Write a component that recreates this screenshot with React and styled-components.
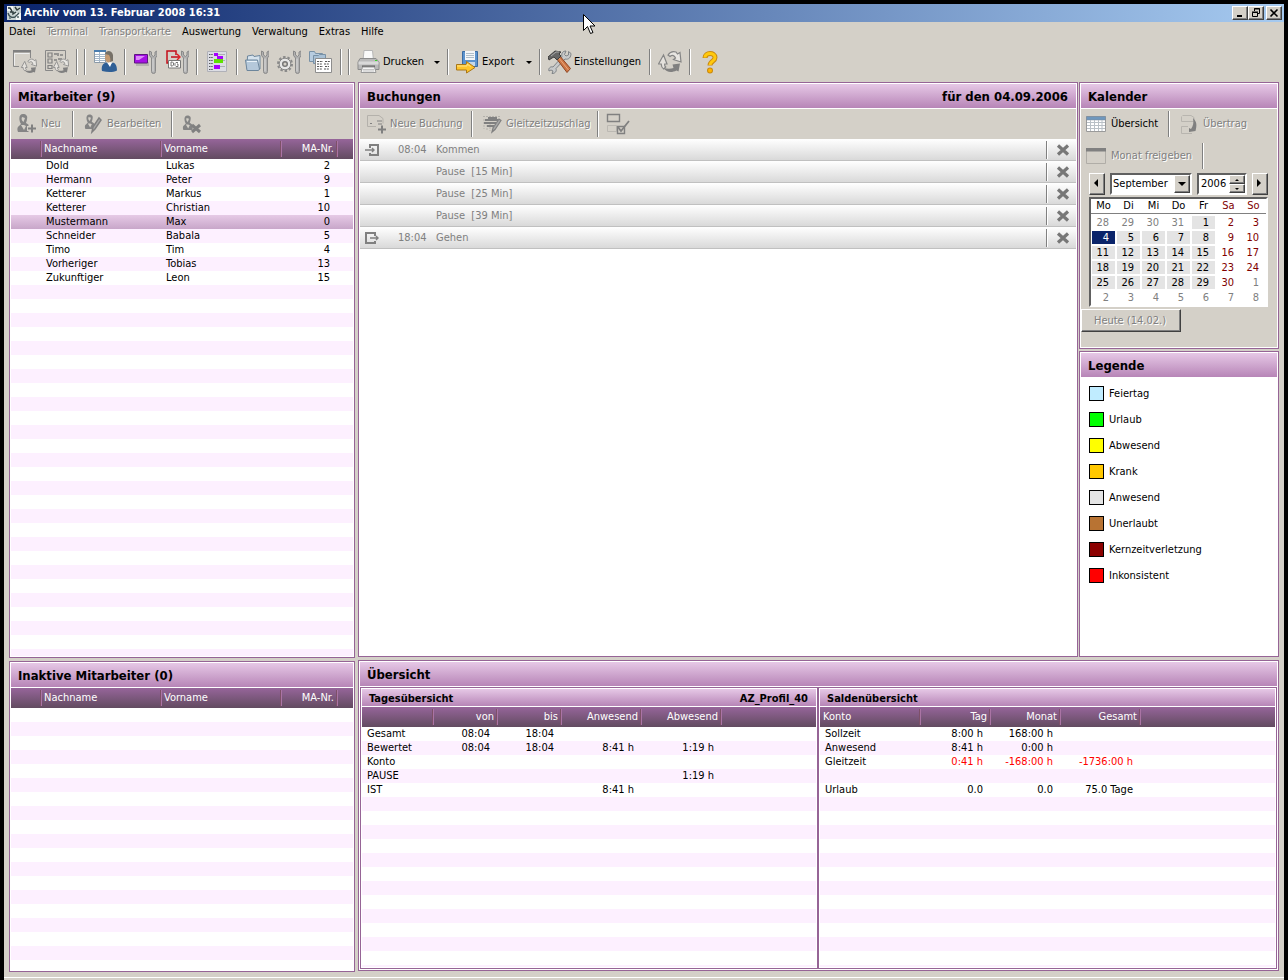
import React, { useState } from 'react';
import styled, { createGlobalStyle, css } from 'styled-components';

const FACE = '#d4d0c8';
const PLUM = '#966496';

const GlobalStyle = createGlobalStyle`
    *, *::before, *::after {
        box-sizing: border-box;
    }

    body {
        margin: 0;
        background: #000;
        color: #000;
    }

    body, button, input, select, table {
        font-family: "DejaVu Sans Condensed", "DejaVu Sans", sans-serif;
        font-stretch: condensed;
        font-size: 11px;
        line-height: 14px;
    }

    h1, h2, h3, ul {
        margin: 0;
        padding: 0;
        list-style: none;
        font-weight: bold;
    }
`

/* window frame */

const Frame = styled.div`
    display: flex;
    flex-direction: column;
    min-height: 100vh;
    padding: 4px 4px 0;
`

const Window = styled.div`
    display: flex;
    flex: 1;
    flex-direction: column;
    background: ${FACE};
`

const TitleBar = styled.header`
    display: flex;
    align-items: center;
    height: 18px;
    padding: 0 2px 0 3px;
    gap: 3px;
    background: linear-gradient(90deg, #0a246a, #a6caf0);
`

const Title = styled.h1`
    flex: 1;
    color: #fff;
    font-size: 11px;
`

const raised = css`
    border: 1px solid;
    border-color: #fff #404040 #404040 #fff;
    box-shadow: inset -1px -1px 0 #808080;
    background: ${FACE};
`

const sunken = css`
    border: 2px solid;
    border-color: #606060 #fff #fff #606060;
    background: #fff;
`

const CaptionButtons = styled.div`
    display: flex;
`

const CaptionButton = styled.button`
    ${raised}
    width: 16px;
    height: 14px;
    margin-left: ${({ $apart }) => ($apart ? '2px' : '0')};
    padding: 0;

    svg {
        display: block;
        margin: auto;
    }
`

const Pointer = styled.svg`
    position: absolute;
    top: 14px;
    left: 583px;
    pointer-events: none;
`

const MenuBar = styled.nav`
    display: flex;
    align-items: center;
    height: 20px;
    padding-left: 5px;
    gap: 11px;
`

const MenuItem = styled.button`
    border: 0;
    padding: 0;
    background: none;
    color: #000;
    white-space: nowrap;

    &:disabled {
        color: #808080;
        text-shadow: 1px 1px 0 #fff;
    }
`

/* toolbars */

const Toolbar = styled.div`
    display: flex;
    align-items: center;
    height: ${({ $main }) => ($main ? '40px' : '30px')};
    padding-left: ${({ $main }) => ($main ? '5px' : '0')};
    background: ${FACE};
`

const ToolButton = styled.button`
    display: flex;
    flex: 0 0 auto;
    align-items: center;
    width: ${({ $width }) => $width || 32}px;
    height: 28px;
    padding: 0 4px;
    gap: 2px;
    border: 0;
    background: none;
    color: #000;
    white-space: nowrap;

    &:disabled {
        color: #808080;
        text-shadow: 1px 1px 0 #fff;
    }

    svg {
        flex: 0 0 auto;
    }
`

const DropMark = styled.span`
    width: 5px;
    margin-left: auto;
    border: 3px solid transparent;
    border-top-color: #000;
    border-bottom: 0;
`

const Divider = styled.span`
    flex: 0 0 2px;
    height: 26px;
    margin: 0 3px;
    border-left: 1px solid #808080;
    border-right: 1px solid #fff;
`

/* panels */

const Workspace = styled.main`
    display: flex;
    flex: 1;
    gap: 3px;
    padding: 0 5px 5px;
`

const SideColumn = styled.div`
    display: flex;
    flex: 0 0 346px;
    flex-direction: column;
    gap: 3px;
`

const CenterColumn = styled.div`
    display: flex;
    flex: 1;
    flex-direction: column;
    gap: 3px;
    padding-bottom: 1px;
`

const UpperRow = styled.div`
    display: grid;
    flex: 1;
    grid-template-columns: 1fr 200px;
    gap: 1px;
`

const CalendarColumn = styled.div`
    display: flex;
    flex-direction: column;
    gap: 2px;
`

const Panel = styled.section`
    display: flex;
    flex: ${({ $height }) => ($height ? `0 0 ${$height}px` : '1')};
    flex-direction: column;
    min-width: 0;
    padding: 1px;
    border: 1px solid ${PLUM};
    background: #fff;
`

const PanelHeader = styled.div`
    display: flex;
    align-items: center;
    justify-content: space-between;
    height: ${({ $small }) => ($small ? '17px' : '24px')};
    margin-bottom: 1px;
    padding: 2px 8px 0 7px;
    background: linear-gradient(#e6c8e6, #b785b7);
`

const PanelTitle = styled.h2`
    font-size: ${({ $small }) => ($small ? '11px' : '13px')};
`

const Overview = styled.div`
    display: grid;
    flex: 1;
    grid-template-columns: 458fr 459fr;
`

/* tables */

const Striped = styled.div`
    flex: 1;
    background: repeating-linear-gradient(#fff 0 14px, #fdf0ff 14px 28px) 0 20px;
`

const Table = styled.table`
    width: 100%;
    table-layout: fixed;
    border-collapse: collapse;
`

const HeadRow = styled.tr`
    height: 20px;
    background: linear-gradient(#96659a, #624b60);
`

const HeadCell = styled.th`
    padding: 0 ${({ $right }) => ($right ? '4px' : '0')} 0 ${({ $inset }) => $inset}px;
    background: ${({ $last }) =>
        $last ? 'none' : 'linear-gradient(90deg, #7d5068 50%, #aa74a4 50%) right center / 2px 16px no-repeat'};
    color: #fff;
    font-weight: normal;
    text-align: ${({ $right }) => ($right ? 'right' : 'left')};
    white-space: nowrap;
`

const Row = styled.tr`
    height: 14px;
    background: ${({ $selected }) => ($selected ? 'linear-gradient(#e6cae6, #c8a6c9)' : 'none')};
    color: ${({ $negative }) => ($negative ? '#f00' : '#000')};
`

const Cell = styled.td`
    padding: 0 ${({ $right }) => ($right ? '8px' : '0')} 0 ${({ $inset }) => $inset}px;
    color: ${({ $plain }) => ($plain ? '#000' : 'inherit')};
    text-align: ${({ $right }) => ($right ? 'right' : 'left')};
    white-space: nowrap;
`

/* bookings */

const Booking = styled.li`
    display: flex;
    align-items: center;
    height: 22px;
    border-bottom: 1px solid #c0c0c0;
    background: linear-gradient(#fff, #d9d9d9);
    color: #808080;
    font-weight: normal;
`

const BookingIcon = styled.span`
    display: flex;
    width: 38px;
    padding-left: 5px;
`

const BookingTime = styled.time`
    width: 38px;
`

const BookingText = styled.span`
    flex: 1;
    white-space: pre;
`

const DeleteButton = styled.button`
    width: 25px;
    height: 20px;
    padding: 0 0 0 5px;
    border: 0;
    background: none;

    svg {
        display: block;
    }
`

const BookingDivider = styled.span`
    width: 2px;
    height: 18px;
    margin-right: 3px;
    border-left: 1px solid #808080;
    border-right: 1px solid #fff;
`

/* calendar */

const CalendarBody = styled.div`
    display: flex;
    flex: 1;
    flex-direction: column;
    align-items: flex-start;
    gap: 2px;
    background: ${FACE};
`

const MonthRow = styled.div`
    display: flex;
    height: 22px;
    margin-left: 8px;
    gap: 5px;
`

const StepButton = styled.button`
    ${raised}
    width: 16px;
    padding: 0 2px 2px 0;

    svg {
        display: block;
        margin: auto;
    }
`

const Field = styled.div`
    ${sunken}
    display: flex;
    width: ${({ $width }) => $width}px;
`

const MonthSelect = styled.select`
    flex: 1;
    min-width: 0;
    padding: 0 0 0 1px;
    border: 0;
    outline: 0;
    appearance: none;
    background: none;
    color: #000;
`

const SelectArrow = styled.span`
    ${raised}
    display: flex;
    align-items: center;
    justify-content: center;
    width: 16px;
    pointer-events: none;
`

const YearInput = styled.input`
    flex: 1;
    min-width: 0;
    padding: 0 0 0 2px;
    border: 0;
    outline: 0;
    background: none;
`

const Spinner = styled.div`
    display: grid;
    width: 16px;
`

const SpinButton = styled.button`
    ${raised}
    padding: 0;

    svg {
        display: block;
        margin: auto;
    }
`

const MonthTable = styled.table`
    ${sunken}
    width: 179px;
    margin-left: 8px;
    table-layout: fixed;
    border-spacing: 0;
`

const WeekdayCell = styled.th`
    height: 16px;
    padding: 0;
    background: linear-gradient(#808080, #808080) 0 14px / 100% 1px no-repeat;
    color: ${({ $weekend }) => ($weekend ? '#800000' : '#000')};
    font-weight: normal;
    line-height: 14px;
    vertical-align: top;
`

const dayColor = { muted: '#808080', weekend: '#800000', today: '#fff', present: '#000' };
const dayFill = { today: '#0a246a', present: '#e4e4e4' };

const DayCell = styled.td`
    height: 15px;
    padding: 0 6px 0 0;
    border: 1px solid #fff;
    background: ${({ $kind }) => dayFill[$kind] || '#fff'};
    color: ${({ $kind }) => dayColor[$kind]};
    line-height: 13px;
    text-align: right;
`

const TodayButton = styled.button`
    ${raised}
    width: 100px;
    height: 23px;
    padding: 0 2px 0 0;
    color: #808080;
    text-shadow: 1px 1px 0 #fff;
`

/* legend */

const LegendList = styled.ul`
    display: flex;
    flex-direction: column;
    padding: 8px;
    gap: 11px;
`

const LegendItem = styled.li`
    display: flex;
    align-items: center;
    gap: 5px;
    font-weight: normal;
`

const Swatch = styled.span`
    width: 15px;
    height: 15px;
    border: 1px solid #000;
    background: ${({ $color }) => $color};
`

const StatusStrip = styled.footer`
    height: 3px;
    border-top: 1px solid #fff;
`

/* icons */

const Icon = ({ children, size = 24, ...rest }) => (
    <svg width={size} height={size} viewBox={`0 0 ${size} ${size}`} fill="none" aria-hidden="true" {...rest}>
        {children}
    </svg>
)

const Wrench = () => (
    <g>
        <path d="M16.500 1v4.500l2 2.500v13.500q0 2 2 2t2-2V8l1.500-2.500V1l-2 1v3l-1.500 1.500L18.500 5V2z" fill="#b0b0b0" stroke="#8a8a8a" />
        <path d="M20 8.500v13" stroke="#dedede" />
    </g>
)

const RecycleArrows = () => (
    <g strokeWidth="1.200">
        <path d="M5.500 5 .5 14h2.700c0 2 1 4 2.500 5l2-2c-1-1-1.200-2-1-3H9z" fill="#e4e1dc" stroke="#858585" />
        <path d="M10 5c2-3 5-4 8-3l1.500 2L22 2.500l1 9.500-7.500-2.500 2-1.500c-1-2.500-3-3.500-5.500-1.500z" fill="#e8e6e2" stroke="#858585" />
        <path d="M5.500 18c4 1 7 1 10 0l-1-3.500 7.500-1-1.500 8-2-1c-5 2.500-10 2-13-2.500z" fill="#808080" />
    </g>
)

const AppIcon = () => (
    <Icon size={14}>
        <path d="M0 0h14v14H0z" fill="#c9d3d2" />
        <path d="M0 0h6v5H0zM9 7h5v7H9z" fill="#f2f5f4" />
        <path d="M1 2h2l2 3M8 1l2 3 3-2M3 6h3v2l3-2" stroke="#2c3a3b" strokeWidth="1.400" />
        <path d="M1 7c1 4 4 5 7 4l4-4" stroke="#3d5054" strokeWidth="1.400" />
        <path d="M2 11h2v2H2zM10 10h2v2h-2z" fill="#78898b" />
    </Icon>
)

const WindowRefreshIcon = () => (
    <Icon>
        <path d="M.5 1v15.500H6M17.500 1v7" stroke="#888" />
        <path d="M0 0h18v2.500H0z" fill="#808080" />
        <path d="M1.500 3.500v12M1.500 3.500h15" stroke="#eee" />
        <g transform="translate(8 8) scale(.68)"><RecycleArrows /></g>
    </Icon>
)

const ListRefreshIcon = () => (
    <Icon>
        <path d="M.5 20.500V.5h20V9M.5 20.500H8" stroke="#888" />
        <path d="M3 3h4v4H3zM3 9h4v4H3zM3 15.500h4v3H3z" stroke="#808080" strokeWidth="1.200" />
        <path d="M9 4h3M13 3v3M15 5h3M9 10h3M13 9h4" stroke="#808080" strokeWidth="1.500" />
        <g transform="translate(8 8) scale(.68)"><RecycleArrows /></g>
    </Icon>
)

const StaffTableIcon = () => (
    <Icon>
        <path d="M1.500.5h11v12h-11z" fill="#fff" stroke="#8b9aa8" />
        <path d="M1 0h12v2H1z" fill="#4a7daf" />
        <path d="M2 4.500h10M2 6.500h10M2 8.500h10M2 10.500h10M6.500 2v10" stroke="#a6b8ca" />
        <path d="M9 21c-1-5 1-8 5-8.500l3 2 3-2c3 1 4 4 4 8-4 2-9 2-15 .5z" fill="#2f5f96" />
        <path d="m14 12.500 3 4.500 2-4.500z" fill="#fff" />
        <ellipse cx="15.500" cy="7.500" rx="3.500" ry="5" fill="#c49a72" />
        <path d="M12 4c1-4 7-4 8 1v6l-3 1c1-3 0-5-1-7z" fill="#777168" />
    </Icon>
)

const TerminalIcon = () => (
    <Icon>
        <path d="M3 12h13v4H3z" fill="#888" opacity=".4" />
        <path d="M1.500 4.500h13V13h-13z" fill="#a510e4" stroke="#5d1780" />
        <path d="M3 6h9l-6 4H3z" fill="#dc8bf9" />
        <Wrench />
    </Icon>
)

const DataGroupIcon = () => (
    <Icon>
        <path d="M11 5V1H2v12h3M6 7h8" stroke="#c40d18" strokeWidth="1.500" />
        <path d="m12 4 3 3-3 3" stroke="#e41b20" strokeWidth="1.400" />
        <path d="M3.500 10.500h12V18h-12z" fill="#fff" stroke="#777" />
        <path d="M6 12v4h1.500l1-1v-2l-1-1zM13 12.500h-2l-1 1v2l1 1h2V14h-1" stroke="#555" strokeWidth=".8" />
        <Wrench />
    </Icon>
)

const ScheduleIcon = () => (
    <Icon>
        <path d="M2.500 1.500h19v20h-19z" fill="#dcdde4" stroke="#b0b1b8" />
        <path d="M4 4.500h4M4 7.500h4M4 10.500h4M4 13.500h4M4 16.500h4M4 19.500h4" stroke="#56595e" strokeDasharray="1.500 .7" />
        <path d="M10 4.500h10M10 10.500h10M10 16.500h10" stroke="#aaadb5" />
        <path d="M9 3h4v3h5v3h-6V6H9zM9 15h6v4H9z" fill="#a800ff" />
        <path d="M9 9h9v4h-9z" fill="#5fe200" />
    </Icon>
)

const FolderToolIcon = () => (
    <Icon>
        <path d="M2.500 6 8 5l1 1.500 6-1V19h-13z" fill="#d5e2ed" stroke="#6d869c" />
        <path d="M.5 10h12l2 9-1 1.500H2z" fill="#b5c8da" stroke="#6d869c" />
        <path d="M2 11.500h10" stroke="#e9f2f9" />
        <Wrench />
    </Icon>
)

const GearToolIcon = () => (
    <Icon>
        <circle cx="8" cy="14" r="7" stroke="#8a8a8a" strokeWidth="2" strokeDasharray="2.500 1.900" />
        <circle cx="8" cy="14" r="5.800" fill="#e6e6e6" stroke="#888" />
        <circle cx="8" cy="14" r="2.300" fill="#d4d0c8" stroke="#777" strokeWidth="1.500" />
        <Wrench />
    </Icon>
)

const FolderListIcon = () => (
    <Icon>
        <path d="M.5 1.500h5l1 2h7v8H.5z" fill="#b7cce0" stroke="#7891a6" />
        <path d="M4.500 5.500h5l1-1h6v9h-12z" fill="#a8c0d5" stroke="#7891a6" />
        <path d="M6.500 8.500h16v14h-16z" fill="#fff" stroke="#8d8d8d" />
        <path d="M8 11.500h6M16 11.500h5M8 14h5M15 14h5M8 16.500h6M16 16.500h4M8 19h5M15 19h5" stroke="#555" strokeDasharray="2 .8" />
    </Icon>
)

const PrinterIcon = () => (
    <Icon>
        <path d="M7 .5h8.500l1 10H6z" fill="#fafafa" stroke="#b6b6b6" />
        <path d="M3 8.500h16l3 3.500v7.500H1v-7.500z" fill="#b9b9b9" stroke="#8c8c8c" />
        <path d="M1.500 11.500h20v3h-20z" fill="#d9d9d9" />
        <path d="M5 16.500h13" stroke="#616161" strokeWidth="2" />
        <path d="M5.500 17h12l1.500 5.500H4z" fill="#f4f4f4" stroke="#999" />
        <path d="M6 19.500h11M6 21h11" stroke="#c5c5c5" />
        <path d="M18 10h2v1h-2z" fill="#39d629" />
    </Icon>
)

const ExportIcon = () => (
    <Icon>
        <path d="M6.500 1.500h15v15h-14L6.500 15z" fill="#5b93ce" stroke="#3b6ca3" />
        <path d="M9 1h10v9H9z" fill="#f3f6f8" />
        <path d="M10 3.500h8M10 5.500h8M10 7.500h8" stroke="#aebdc8" />
        <path d="M11 12h8v4h-8z" fill="#c6d8e7" />
        <path d="M.5 14.500h10v-3l8.500 6-8.500 5.500v-3H.5z" fill="#ffc52b" stroke="#a97718" />
        <path d="M1 16h10v-2l3.500 2.500" stroke="#ffe58a" />
    </Icon>
)

const ToolsIcon = () => (
    <Icon>
        <path d="M20.500 1.500v3.500l-2.500 1-1.500-1.500L18 1c-3 0-5 2-4 6L5 17c-3-1-5 2-4 4l2-1 2 1-1 2.500c3 0 5-2 4-5L17 9c4 1 6-2 6-5.500z" fill="#c7c9ca" stroke="#777c80" strokeWidth=".9" />
        <path d="m8 8 3-3 11.500 13.500-3.500 4z" fill="#cd7544" stroke="#8f4623" />
        <path d="m10 7 10.500 13" stroke="#eba77b" />
        <path d="M1 10 0 7l7-6 6 1-2 2 2 2-4 4-3-3-2 1z" fill="#666" stroke="#404040" />
        <path d="m3 6 5-4h3" stroke="#aaa" />
    </Icon>
)

const RecycleIcon = () => <Icon><RecycleArrows /></Icon>

const HelpIcon = () => (
    <Icon>
        <path d="M7 8c0-6 10-6 10-.5 0 4-5 3.500-5 8" stroke="#c98a10" strokeWidth="5" />
        <circle cx="12" cy="20.500" r="3" fill="#c98a10" />
        <path d="M7 7.500c0-5.500 10-5.500 10 0 0 4-5 3.500-5 7.500" stroke="#ffc90e" strokeWidth="3" />
        <circle cx="12" cy="20.500" r="2" fill="#ffb400" />
    </Icon>
)

const PersonShape = () => (
    <path d="M8 2c3 0 5 2 4 5 0 2-1 3-1 4l3 2c1 2 1 5 0 7H3c-1-2-1-5 1-6l2-2C4 9 3 2 8 2zm-2 11 3 5 2-4-2-1zM7 5c-1 2 0 4 1.500 5L10 6z" fill="#858585" fillRule="evenodd" />
)

const PersonAddIcon = () => (
    <Icon>
        <PersonShape />
        <path d="M12 16.500h8M16 12.500v8" stroke={FACE} strokeWidth="5" />
        <path d="M13 16.500h8M17 12.500v8" stroke="#808080" strokeWidth="2" />
    </Icon>
)

const PersonEditIcon = () => (
    <Icon>
        <g transform="translate(2 1) scale(.8)"><PersonShape /></g>
        <path d="m11 20 1-5 6-9 2 2-6 9z" fill="#aaa" stroke="#808080" strokeWidth="1.500" />
    </Icon>
)

const PersonRemoveIcon = () => (
    <Icon>
        <g transform="translate(1 2) scale(.8)"><PersonShape /></g>
        <path d="m12 13 8 7m0-7-8 7" stroke="#808080" strokeWidth="3" />
    </Icon>
)

const BookingAddIcon = () => (
    <Icon>
        <path d="M3.500 14.500V3.500H15l4 3v5M3.500 14.500H12" stroke="#b4b1ab" />
        <path d="M6 11.500h2M13 9h5M14 12h4" stroke="#808080" />
        <path d="M14 17.500h8M18 13.500v8" stroke="#808080" strokeWidth="2" />
    </Icon>
)

const BonusIcon = () => (
    <Icon>
        <path d="M3 4.500h17M4 7v10M7 10v8M10 12v7M13 14v5" stroke="#b4b1ab" strokeDasharray="2 1" />
        <path d="M5 8h13M4 11h12M7 14h7M8 6h9" stroke="#808080" strokeWidth="2" />
        <path d="m12 20 1-4 6-9 2 1.500-6 9z" fill="#a8a8a8" stroke="#808080" strokeWidth="1.200" />
    </Icon>
)

const CheckBoxesIcon = () => (
    <Icon>
        <path d="M1.500 2.500h12v7h-12z" stroke="#808080" strokeWidth="1.400" />
        <path d="M1.500 13.500h9v6h-9z" stroke="#bcb9b3" />
        <path d="M11.500 14.500h7v7h-7z" stroke="#808080" strokeWidth="1.400" />
        <path d="m12 15 3 4 8-10" stroke="#808080" strokeWidth="1.800" />
    </Icon>
)

const OverviewIcon = () => (
    <Icon>
        <path d="M1.500 4.500h19v15h-19z" fill="#fff" stroke="#9a9a9a" />
        <path d="M1.500 4.500h19V8h-19z" fill="#6f97bd" stroke="#7e8a96" strokeWidth=".5" />
        <path d="M2 10.500h18M2 13.500h18M2 16.500h18M5.500 8v11M9.500 8v11M13.500 8v11M17 8v11" stroke="#b9c0c6" />
    </Icon>
)

const TransferIcon = () => (
    <Icon>
        <path d="M5.500 3.500H14l3 2v4H4.500v-5M4.500 21.500v-7H11M4.500 21.500H15" stroke="#b8b5af" />
        <path d="M16 6c4 4 4 7 2.500 13L12 20v-4l2 1c2-3 3-6 2-11z" fill="#808080" />
    </Icon>
)

const MonthIcon = () => (
    <Icon>
        <path d="M1.500 4.500h19v15h-19z" stroke="#b0ada7" />
        <path d="M1 4h20v3.500H1z" fill="#808080" />
    </Icon>
)

const ArriveIcon = () => (
    <Icon size={16}>
        <path d="M5 6V3h8v10H5v-2" stroke="#808080" strokeWidth="2" />
        <path d="M0 8h9M7 6l2 2-2 2" stroke="#808080" strokeWidth="1.400" />
    </Icon>
)

const LeaveIcon = () => (
    <Icon size={16}>
        <path d="M10 6V3H1v10h9v-2" stroke="#808080" strokeWidth="2" />
        <path d="M5 8h8M11 6l2 2-2 2" stroke="#808080" strokeWidth="1.400" />
    </Icon>
)

const CrossIcon = () => (
    <Icon size={14}>
        <path d="m2 2.500 10 9m0-9-10 9" stroke="#777" strokeWidth="3.200" />
    </Icon>
)

const Triangle = ({ d, width = 4, height = 8 }) => (
    <svg width={width} height={height} viewBox={`0 0 ${width} ${height}`} aria-hidden="true">
        <path d={d} fill="#000" />
    </svg>
)

/* data */

const menu = [
    ['Datei', true],
    ['Terminal', false],
    ['Transportkarte', false],
    ['Auswertung', true],
    ['Verwaltung', true],
    ['Extras', true],
    ['Hilfe', true],
];

const staffColumns = [
    { label: '', width: 31 },
    { label: 'Nachname', width: 120, headInset: 2, inset: 4 },
    { label: 'Vorname', width: 120, headInset: 2, inset: 4 },
    { label: 'MA-Nr.', width: 56, right: true },
    { label: '' },
];

const staff = [
    ['Dold', 'Lukas', 2],
    ['Hermann', 'Peter', 9],
    ['Ketterer', 'Markus', 1],
    ['Ketterer', 'Christian', 10],
    ['Mustermann', 'Max', 0],
    ['Schneider', 'Babala', 5],
    ['Timo', 'Tim', 4],
    ['Vorheriger', 'Tobias', 13],
    ['Zukunftiger', 'Leon', 15],
].map(([last, first, number]) => ({
    cells: ['', last, first, number, ''],
    selected: last === 'Mustermann',
}));

const dayColumns = [
    { label: '', width: 72, inset: 5 },
    { label: 'von', width: 64, right: true },
    { label: 'bis', width: 64, right: true },
    { label: 'Anwesend', width: 80, right: true },
    { label: 'Abwesend', width: 80, right: true },
    { label: '' },
];

const dayRows = [
    { cells: ['Gesamt', '08:04', '18:04', '', '', ''] },
    { cells: ['Bewertet', '08:04', '18:04', '8:41 h', '1:19 h', ''] },
    { cells: ['Konto', '', '', '', '', ''] },
    { cells: ['PAUSE', '', '', '', '1:19 h', ''] },
    { cells: ['IST', '', '', '8:41 h', '', ''] },
];

const balanceColumns = [
    { label: 'Konto', width: 101, headInset: 3, inset: 5 },
    { label: 'Tag', width: 70, right: true },
    { label: 'Monat', width: 70, right: true },
    { label: 'Gesamt', width: 80, right: true },
    { label: '' },
];

const balanceRows = [
    { cells: ['Sollzeit', '8:00 h', '168:00 h', '', ''] },
    { cells: ['Anwesend', '8:41 h', '0:00 h', '', ''] },
    { cells: ['Gleitzeit', '0:41 h', '-168:00 h', '-1736:00 h', ''], negative: true },
    { cells: ['', '', '', '', ''] },
    { cells: ['Urlaub', '0.0', '0.0', '75.0 Tage', ''] },
];

const bookings = [
    { icon: <ArriveIcon />, time: '08:04', text: 'Kommen' },
    { text: 'Pause  [15 Min]' },
    { text: 'Pause  [25 Min]' },
    { text: 'Pause  [39 Min]' },
    { icon: <LeaveIcon />, time: '18:04', text: 'Gehen' },
];

const months = ['Januar', 'Februar', 'März', 'April', 'Mai', 'Juni', 'Juli', 'August', 'September', 'Oktober', 'November', 'Dezember'];
const weekdays = ['Mo', 'Di', 'Mi', 'Do', 'Fr', 'Sa', 'So'];

// 28 August to 8 October, six weeks
const days = Array.from({ length: 42 }, (_, i) => {
    const offset = i - 3;
    if (offset < 1) return { day: 31 + offset, kind: 'muted' };
    if (offset > 30) return { day: offset - 30, kind: 'muted' };
    if (offset === 4) return { day: offset, kind: 'today' };
    return { day: offset, kind: i % 7 > 4 ? 'weekend' : 'present' };
});
const weeks = [0, 1, 2, 3, 4, 5].map((w) => days.slice(w * 7, w * 7 + 7));

const legend = [
    ['Feiertag', '#c0ecff'],
    ['Urlaub', '#00ff00'],
    ['Abwesend', '#ffff00'],
    ['Krank', '#ffc800'],
    ['Anwesend', '#e4e4e4'],
    ['Unerlaubt', '#b87333'],
    ['Kernzeitverletzung', '#8b0000'],
    ['Inkonsistent', '#ff0000'],
];

/* components */

const DataTable = ({ label, columns, rows }) => (
    <Striped>
        <Table aria-label={label}>
            <colgroup>
                {columns.map(({ width }, i) => <col key={i} width={width} />)}
            </colgroup>
            <thead>
                <HeadRow>
                    {columns.map(({ label: text, right, headInset = 0 }, i) => (
                        <HeadCell key={i} $right={right} $inset={headInset} $last={i === columns.length - 1}>{text}</HeadCell>
                    ))}
                </HeadRow>
            </thead>
            <tbody>
                {rows.map(({ cells, selected, negative }, r) => (
                    <Row key={r} $selected={selected} $negative={negative}>
                        {cells.map((cell, i) => (
                            <Cell key={i} $right={columns[i].right} $inset={columns[i].inset || 0} $plain={i === 0}>{cell}</Cell>
                        ))}
                    </Row>
                ))}
            </tbody>
        </Table>
    </Striped>
)

const Calendar = () => {
    const [month, setMonth] = useState('September');
    const [year, setYear] = useState('2006');

    return (
        <CalendarBody>
            <Toolbar>
                <ToolButton $width={84}><OverviewIcon />Übersicht</ToolButton>
                <Divider />
                <ToolButton $width={84} disabled><TransferIcon />Übertrag</ToolButton>
            </Toolbar>
            <Toolbar>
                <ToolButton $width={118} disabled><MonthIcon />Monat freigeben</ToolButton>
                <Divider />
            </Toolbar>
            <MonthRow>
                <StepButton aria-label="Voriger Monat"><Triangle d="M4 0v8L0 4z" /></StepButton>
                <Field $width={82}>
                    <MonthSelect aria-label="Monat" value={month} onChange={(e) => setMonth(e.target.value)}>
                        {months.map((name) => <option key={name}>{name}</option>)}
                    </MonthSelect>
                    <SelectArrow><Triangle d="M0 0h8L4 4z" width={8} height={4} /></SelectArrow>
                </Field>
                <Field $width={50}>
                    <YearInput aria-label="Jahr" value={year} onChange={(e) => setYear(e.target.value)} />
                    <Spinner>
                        <SpinButton aria-label="Jahr vor" onClick={() => setYear(String(Number(year) + 1))}><Triangle d="M0 2h4L2 0z" width={4} height={2} /></SpinButton>
                        <SpinButton aria-label="Jahr zurück" onClick={() => setYear(String(Number(year) - 1))}><Triangle d="M0 0h4L2 2z" width={4} height={2} /></SpinButton>
                    </Spinner>
                </Field>
                <StepButton aria-label="Nächster Monat"><Triangle d="M0 0v8l4-4z" /></StepButton>
            </MonthRow>
            <MonthTable aria-label="September 2006">
                <thead>
                    <tr>
                        {weekdays.map((name, i) => <WeekdayCell key={name} $weekend={i > 4}>{name}</WeekdayCell>)}
                    </tr>
                </thead>
                <tbody>
                    {weeks.map((week, w) => (
                        <tr key={w}>
                            {week.map(({ day, kind }) => <DayCell key={day} $kind={kind}>{day}</DayCell>)}
                        </tr>
                    ))}
                </tbody>
            </MonthTable>
            <TodayButton disabled>Heute (14.02.)</TodayButton>
        </CalendarBody>
    )
}

const MainToolbar = () => (
    <Toolbar $main>
        <ToolButton disabled aria-label="Terminal abgleichen"><WindowRefreshIcon /></ToolButton>
        <ToolButton disabled aria-label="Transportkarte abgleichen"><ListRefreshIcon /></ToolButton>
        <Divider />
        <Divider />
        <ToolButton aria-label="Mitarbeiterliste"><StaffTableIcon /></ToolButton>
        <Divider />
        <ToolButton aria-label="Terminals verwalten"><TerminalIcon /></ToolButton>
        <ToolButton aria-label="Datengruppen verwalten"><DataGroupIcon /></ToolButton>
        <Divider />
        <ToolButton aria-label="Zeitprofile"><ScheduleIcon /></ToolButton>
        <Divider />
        <ToolButton aria-label="Ordner verwalten"><FolderToolIcon /></ToolButton>
        <ToolButton aria-label="System verwalten"><GearToolIcon /></ToolButton>
        <ToolButton aria-label="Konten verwalten"><FolderListIcon /></ToolButton>
        <Divider />
        <Divider />
        <ToolButton $width={91}><PrinterIcon />Drucken<DropMark /></ToolButton>
        <Divider />
        <ToolButton $width={84}><ExportIcon />Export<DropMark /></ToolButton>
        <Divider />
        <ToolButton $width={102}><ToolsIcon />Einstellungen</ToolButton>
        <Divider />
        <ToolButton disabled aria-label="Aktualisieren"><RecycleIcon /></ToolButton>
        <Divider />
        <ToolButton aria-label="Hilfe"><HelpIcon /></ToolButton>
    </Toolbar>
)

const App = () => {
    return (
        <Frame>
            <GlobalStyle />
            <Window>
                <TitleBar>
                    <AppIcon />
                    <Title>Archiv vom 13. Februar 2008 16:31</Title>
                    <CaptionButtons>
                        <CaptionButton aria-label="Minimieren"><Icon size={10}><path d="M2 8h5" stroke="#000" strokeWidth="2" /></Icon></CaptionButton>
                        <CaptionButton aria-label="Wiederherstellen">
                            <Icon size={10}><path d="M3.500 3V.5h5v5H7M3 1h6M1.500 4.500h5v4h-5zM1 4h6" stroke="#000" /></Icon>
                        </CaptionButton>
                        <CaptionButton $apart aria-label="Schließen"><Icon size={10}><path d="m1.500 1.500 7 7m0-7-7 7" stroke="#000" strokeWidth="1.600" /></Icon></CaptionButton>
                    </CaptionButtons>
                </TitleBar>
                <MenuBar>
                    {menu.map(([name, enabled]) => <MenuItem key={name} disabled={!enabled}>{name}</MenuItem>)}
                </MenuBar>
                <MainToolbar />
                <Workspace>
                    <SideColumn>
                        <Panel>
                            <PanelHeader><PanelTitle>Mitarbeiter (9)</PanelTitle></PanelHeader>
                            <Toolbar>
                                <ToolButton $width={58} disabled><PersonAddIcon />Neu</ToolButton>
                                <Divider />
                                <ToolButton $width={91} disabled><PersonEditIcon />Bearbeiten</ToolButton>
                                <Divider />
                                <ToolButton disabled aria-label="Entfernen"><PersonRemoveIcon /></ToolButton>
                            </Toolbar>
                            <DataTable label="Mitarbeiter" columns={staffColumns} rows={staff} />
                        </Panel>
                        <Panel $height={311}>
                            <PanelHeader><PanelTitle>Inaktive Mitarbeiter (0)</PanelTitle></PanelHeader>
                            <DataTable label="Inaktive Mitarbeiter" columns={staffColumns} rows={[]} />
                        </Panel>
                    </SideColumn>
                    <CenterColumn>
                        <UpperRow>
                            <Panel>
                                <PanelHeader>
                                    <PanelTitle>Buchungen</PanelTitle>
                                    <PanelTitle as="strong">für den 04.09.2006</PanelTitle>
                                </PanelHeader>
                                <Toolbar>
                                    <ToolButton $width={108} disabled><BookingAddIcon />Neue Buchung</ToolButton>
                                    <Divider />
                                    <ToolButton $width={118} disabled><BonusIcon />Gleitzeitzuschlag</ToolButton>
                                    <Divider />
                                    <ToolButton disabled aria-label="Auswahl prüfen"><CheckBoxesIcon /></ToolButton>
                                </Toolbar>
                                <ul>
                                    {bookings.map(({ icon, time, text }) => (
                                        <Booking key={text}>
                                            <BookingIcon>{icon}</BookingIcon>
                                            <BookingTime>{time}</BookingTime>
                                            <BookingText>{text}</BookingText>
                                            <BookingDivider />
                                            <DeleteButton aria-label={`${text} löschen`}><CrossIcon /></DeleteButton>
                                        </Booking>
                                    ))}
                                </ul>
                            </Panel>
                            <CalendarColumn>
                                <Panel $height={267}>
                                    <PanelHeader><PanelTitle>Kalender</PanelTitle></PanelHeader>
                                    <Calendar />
                                </Panel>
                                <Panel>
                                    <PanelHeader><PanelTitle>Legende</PanelTitle></PanelHeader>
                                    <LegendList>
                                        {legend.map(([name, color]) => (
                                            <LegendItem key={name}><Swatch $color={color} />{name}</LegendItem>
                                        ))}
                                    </LegendList>
                                </Panel>
                            </CalendarColumn>
                        </UpperRow>
                        <Panel $height={311}>
                            <PanelHeader><PanelTitle>Übersicht</PanelTitle></PanelHeader>
                            <Overview>
                                <Panel>
                                    <PanelHeader $small>
                                        <PanelTitle as="h3" $small>Tagesübersicht</PanelTitle>
                                        <PanelTitle as="strong" $small>AZ_Profil_40</PanelTitle>
                                    </PanelHeader>
                                    <DataTable label="Tagesübersicht" columns={dayColumns} rows={dayRows} />
                                </Panel>
                                <Panel>
                                    <PanelHeader $small><PanelTitle as="h3" $small>Saldenübersicht</PanelTitle></PanelHeader>
                                    <DataTable label="Saldenübersicht" columns={balanceColumns} rows={balanceRows} />
                                </Panel>
                            </Overview>
                        </Panel>
                    </CenterColumn>
                </Workspace>
                <StatusStrip />
            </Window>
            <Pointer width="12" height="21" viewBox="0 0 12 21" aria-hidden="true">
                <path d="M.5.5v16l4-4 3 7 2.500-1-3-6.500h5z" fill="#fff" stroke="#000" />
            </Pointer>
        </Frame>
    )
}

export default App;
